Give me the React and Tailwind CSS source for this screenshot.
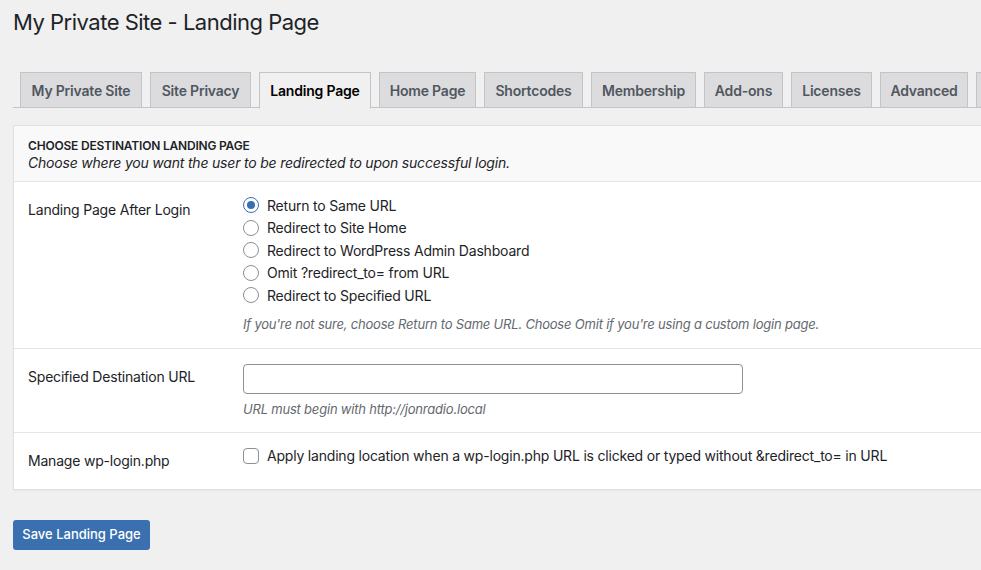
import React from "react";

const tabs = [
  { label: "My Private Site", w: 122 },
  { label: "Site Privacy", w: 101 },
  { label: "Landing Page", w: 112, active: true },
  { label: "Home Page", w: 97 },
  { label: "Shortcodes", w: 99 },
  { label: "Membership", w: 105 },
  { label: "Add-ons", w: 79 },
  { label: "Licenses", w: 81 },
  { label: "Advanced", w: 88 },
];

const radios = [
  "Return to Same URL",
  "Redirect to Site Home",
  "Redirect to WordPress Admin Dashboard",
  "Omit ?redirect_to= from URL",
  "Redirect to Specified URL",
];

function Radio({ checked }) {
  return checked ? (
    <span className="w-4 h-4 rounded-full border border-[#3a6fb0] bg-white flex items-center justify-center shrink-0">
      <span className="w-2 h-2 rounded-full bg-[#3a6fb0]" />
    </span>
  ) : (
    <span className="w-4 h-4 rounded-full border border-[#8c8f94] bg-white shrink-0" />
  );
}

export default function App() {
  return (
    <div
      className="w-[981px] h-[570px] overflow-hidden bg-[#f0f0f1] text-[#1d2327]"
      style={{ fontFamily: "Inter, 'Noto Sans', sans-serif" }}
    >
      <div className="w-[1100px] pl-[13px]">
        <h1 className="pt-[7px] text-[22px] leading-[30px] font-normal tracking-[-0.5px] text-[#1d2327]">
          My Private Site - Landing Page
        </h1>

        <div className="mt-[35px] flex border-b border-[#c3c4c7] h-[36px]">
          {tabs.map((t, i) => (
            <div
              key={t.label}
              className={
                "h-[36px] flex items-center justify-center border text-[14px] font-semibold tracking-[-0.2px] shrink-0 " +
                (t.active
                  ? "bg-[#f0f0f1] border-[#c3c4c7] border-b-[#f0f0f1] text-[#000] -mb-px h-[37px]"
                  : "bg-[#dcdcde] border-[#c3c4c7] text-[#50575e]")
              }
              style={{ width: t.w, marginLeft: i === 0 ? 7 : 8 }}
            >
              {t.label}
            </div>
          ))}
          <div className="ml-[8px] h-[36px] w-[60px] border border-[#c3c4c7] bg-[#dcdcde] shrink-0" />
        </div>

        <div className="mt-[17px] bg-white border border-[#e0e0e0] shadow-[0_1px_1px_rgba(0,0,0,0.04)] tracking-[-0.2px]">
          <div className="bg-[#f9f9f9] border-b border-[#e5e5e5] pl-[14px] pt-[11px] pb-[10px]">
            <div className="text-[12px] leading-[18px] font-semibold uppercase text-[#1d2327]">
              Choose Destination Landing Page
            </div>
            <div className="text-[14px] leading-[16px] italic text-[#1d2327]">
              Choose where you want the user to be redirected to upon successful login.
            </div>
          </div>

          <div className="flex border-b border-[#e5e5e5]">
            <div className="w-[229px] pl-[14px] pt-[18px] text-[14px] leading-[20px]">
              Landing Page After Login
            </div>
            <div className="pt-[12px] pb-[15px]">
              {radios.map((r, i) => (
                <div key={r} className="h-[22.5px] flex items-center gap-[8px] text-[14px]">
                  <Radio checked={i === 0} />
                  <span>{r}</span>
                </div>
              ))}
              <div className="mt-[8px] text-[13px] leading-[18px] italic text-[#646970]">
                If you're not sure, choose Return to Same URL. Choose Omit if you're using a custom login page.
              </div>
            </div>
          </div>

          <div className="flex border-b border-[#e5e5e5]">
            <div className="w-[229px] pl-[14px] pt-[18px] text-[14px] leading-[20px]">
              Specified Destination URL
            </div>
            <div className="pt-[15px] pb-[14px]">
              <div className="w-[500px] h-[30px] border border-[#8c8f94] rounded-[4px] bg-white" />
              <div className="mt-[6px] text-[13px] leading-[18px] italic text-[#646970]">
                URL must begin with http://jonradio.local
              </div>
            </div>
          </div>

          <div className="flex">
            <div className="w-[229px] pl-[14px] pt-[18px] text-[14px] leading-[20px]">
              Manage wp-login.php
            </div>
            <div className="pt-[13px] pb-[23px]">
              <div className="h-[20px] flex items-center gap-[8px] text-[14px]">
                <span className="w-4 h-4 rounded-[4px] border border-[#8c8f94] bg-white shrink-0" />
                <span>
                  Apply landing location when a wp-login.php URL is clicked or typed without &amp;redirect_to= in URL
                </span>
              </div>
            </div>
          </div>
        </div>

        <div className="mt-[30px]">
          <button className="w-[137px] h-[30px] rounded-[3px] bg-[#3a6fb0] text-white text-[13px] font-medium">
            Save Landing Page
          </button>
        </div>
      </div>
    </div>
  );
}
